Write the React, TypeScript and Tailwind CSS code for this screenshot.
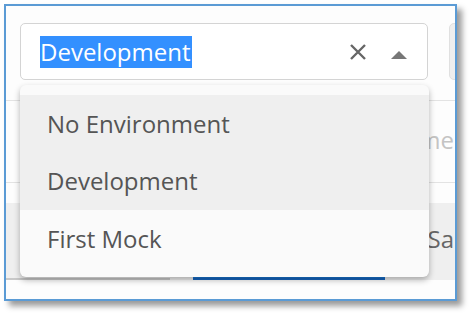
import React from 'react';

const font = { fontFamily: '"Open Sans", "Noto Sans", sans-serif' };

const options = [
  { label: 'No Environment', active: true },
  { label: 'Development', active: true },
  { label: 'First Mock', active: false },
];

const ClearIcon = () => (
  <svg width="18" height="18" viewBox="0 0 18 18">
    <path d="M2 2 L16 16 M16 2 L2 16" stroke="#666" strokeWidth="2.4" strokeLinecap="butt" />
  </svg>
);

const CaretUp = () => (
  <svg width="16" height="8" viewBox="0 0 16 8">
    <polygon points="0,8 8,0 16,8" fill="#777" />
  </svg>
);

const App = () => {
  return (
    <div className="w-[470px] h-[314px] bg-white pl-[4px] pt-[4px]" style={font}>
      <div className="relative w-[453px] h-[297px] border-2 border-[#5b9bd5] bg-[#fdfdfd] shadow-[5px_5px_6px_rgba(0,0,0,0.4)] overflow-hidden">
        {/* page behind the dropdown */}
        <div className="flex flex-col">
          <div className="flex gap-[21px] pl-[14px] pt-[17px] h-[94px]">
            <div className="w-[408px] h-[57px] shrink-0 border border-[#d4d4d4] rounded-[5px] bg-white flex items-center pl-[19px] pr-[20px]">
              <span className="text-[24px] leading-[32px] bg-[#3390ff] text-white pr-[1px]">Development</span>
              <div className="ml-auto flex items-center gap-[24px]">
                <ClearIcon />
                <div className="pt-[6px]">
                  <CaretUp />
                </div>
              </div>
            </div>
            <div className="w-[40px] h-[57px] shrink-0 border border-[#e0e0e0] rounded-[5px] bg-[#eeeeee]" />
          </div>
          <div className="h-[82px] border-t border-[#e3e3e3] flex items-center justify-end pr-[1px]">
            <span className="text-[24px] text-[#c4c4c4] whitespace-nowrap pb-[4px]">me</span>
          </div>
          <div className="h-[21px] border-t border-[#e3e3e3]" />
          <div className="h-[77px] bg-[#efefef] flex items-center">
            <div className="w-[164px] h-full border-b-2 border-[#c8c8c8]" />
            <div className="w-[192px] h-full ml-[23px] bg-[#1976d2] border-b-2 border-[#1565c0]" />
            <span className="ml-auto text-[24px] text-[#666] whitespace-nowrap pr-[1px] pb-[6px]">Sa</span>
          </div>
        </div>

        {/* dropdown menu */}
        <div className="absolute left-[14px] top-[79px] w-[409px] h-[192px] bg-[#fafafa] rounded-[6px] shadow-[0_3px_6px_rgba(0,0,0,0.3)] pt-[10px] flex flex-col">
          {options.map((o) => (
            <div
              key={o.label}
              className={`h-[57.5px] flex items-center pl-[27px] text-[24px] text-[#555] ${o.active ? 'bg-[#efefef]' : ''}`}
            >
              {o.label}
            </div>
          ))}
        </div>
      </div>
    </div>
  );
};

export default App;
